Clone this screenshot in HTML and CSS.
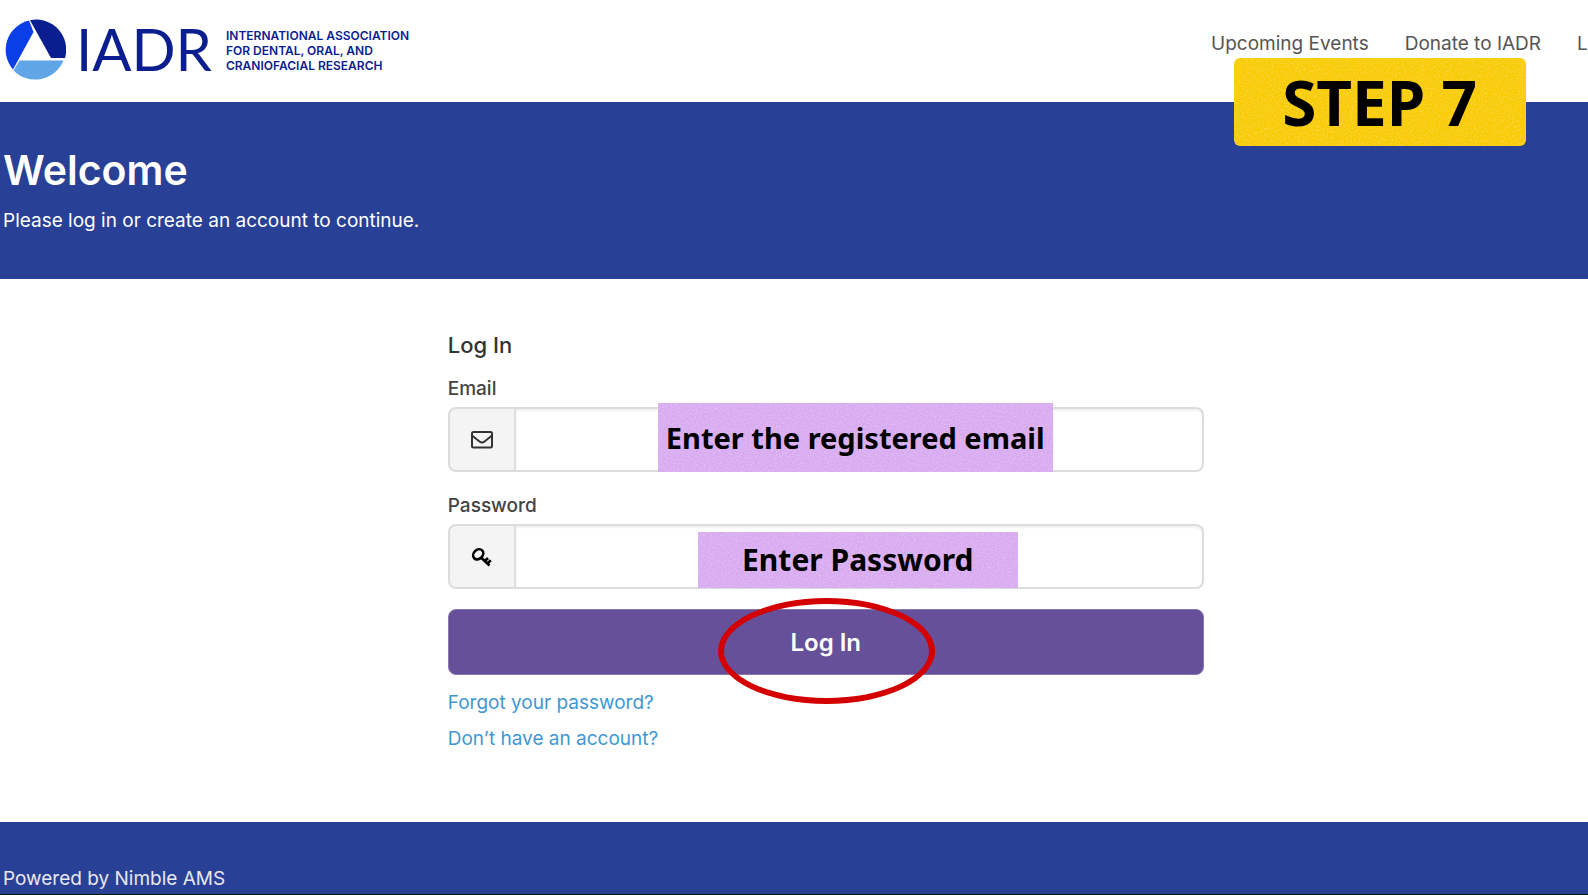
FILE: index.html
```html
<!DOCTYPE html>
<html lang="en">
  <head>
    <title>Log In - IADR</title>
    <meta charset="UTF-8" />
    <meta name="viewport" content="width=device-width" />
    <link rel="stylesheet" href="styles.css">
  </head>
  <body>
    <div class="page">
      <!-- Top bar with logo and links -->
      <header class="header">
        <a class="logo" href="#">
          <svg class="logo-mark" viewBox="0 0 62 62" width="62" height="62" aria-hidden="true">
            <path d="M25 1.600 A30 30 0 0 0 9 50.500 L29.500 13 Z" fill="#0a3fe8" />
            <path d="M26 1.200 A30 30 0 0 1 61 39 L47 39 Z" fill="#0a1e8f" />
            <path d="M15.500 41.500 L59.500 41.500 A30.500 30.500 0 0 1 9.500 51.500 Z" fill="#60a5e6" />
          </svg>
          <span class="logo-name">IADR</span>
          <span class="logo-text">INTERNATIONAL ASSOCIATION<br>FOR DENTAL, ORAL, AND<br>CRANIOFACIAL RESEARCH</span>
        </a>
        <nav class="nav">
          <a href="#">Upcoming Events</a>
          <a href="#">Donate to IADR</a>
          <a href="#">Log In</a>
        </nav>
        <div class="note note-step">
          <svg class="grain" aria-hidden="true">
            <filter id="grain">
              <feTurbulence type="fractalNoise" baseFrequency="0.6" numOctaves="2" />
              <feColorMatrix values="0 0 0 0 1  0 0 0 0 1  0 0 0 0 1  1.2 0 0 0 -0.5" />
            </filter>
            <rect width="100%" height="100%" filter="url(#grain)" />
          </svg>
          <span>STEP 7</span>
        </div>
      </header>

      <!-- Welcome banner -->
      <section class="banner">
        <h1>Welcome</h1>
        <p>Please log in or create an account to continue.</p>
      </section>

      <main class="main">
        <form class="login-form">
          <h2>Log In</h2>

          <label for="email">Email</label>
          <div class="input-group">
            <span class="input-icon">
              <svg viewBox="0 0 22 18" width="22" height="18" fill="none" stroke="#333" stroke-width="2" stroke-linejoin="round" aria-hidden="true">
                <rect x="1" y="1" width="20" height="15.500" rx="1.500" />
                <path d="M1 4.500 L8.500 10.500 Q11 12.500 13.500 10.500 L21 4.500" />
              </svg>
            </span>
            <input type="email" id="email" name="email">
            <div class="note note-email">
              <svg class="grain" aria-hidden="true"><rect width="100%" height="100%" filter="url(#grain)" /></svg>
              <span>Enter the registered email</span>
            </div>
          </div>

          <label for="password">Password</label>
          <div class="input-group">
            <span class="input-icon">
              <svg viewBox="0 0 22 20" width="22" height="20" fill="none" stroke="#000" stroke-width="2.600" aria-hidden="true">
                <ellipse cx="7.200" cy="7.300" rx="5.600" ry="4.500" transform="rotate(-45 7.200 7.300)" />
                <path d="M10 10.500 L18.500 18.500 M14 14 L17 11 M16.500 16.500 L19.800 13.300" />
              </svg>
            </span>
            <input type="password" id="password" name="password">
            <div class="note note-password">
              <svg class="grain" aria-hidden="true"><rect width="100%" height="100%" filter="url(#grain)" /></svg>
              <span>Enter Password</span>
            </div>
          </div>

          <div class="submit-row">
            <button type="submit" class="login-button">Log In</button>
            <div class="ring"></div>
          </div>

          <a class="form-link" href="#">Forgot your password?</a>
          <a class="form-link" href="#">Don’t have an account?</a>
        </form>
      </main>

      <footer class="footer">Powered by Nimble AMS</footer>
    </div>
  </body>
</html>
```

FILE: styles.css
```css
* {
  box-sizing: border-box;
}

body {
  margin: 0;
  background-color: #fff;
  color: #444;
  font-family: Inter, "Liberation Sans", sans-serif;
  font-size: 19px;
  line-height: 36px;
  overflow: hidden;
}

a {
  text-decoration: none;
}

/* The page runs a little wider than the window */
.page {
  display: flex;
  flex-direction: column;
  width: 104%;
  min-height: 100vh;
}

/* Header */
.header {
  position: relative;
  display: flex;
  justify-content: space-between;
  align-items: center;
  height: 102px;
  padding: 0 19px 2px 4px;
}

.logo {
  display: flex;
  align-items: center;
  color: #0a1e8f;
}

.logo-name {
  margin: 0 14px 0 10px;
  padding-bottom: 2px;
  font-family: Lato, sans-serif;
  font-size: 58px;
}

.logo-text {
  font-size: 12px;
  font-weight: 600;
  line-height: 15px;
}

.nav {
  display: flex;
  gap: 36px;
  padding-bottom: 12px;
  white-space: nowrap;
}

.nav a {
  color: #555;
}

/* Welcome banner */
.banner {
  padding: 40px 3px;
  background-color: #284095;
  color: #fff;
}

.banner h1 {
  margin: 0 0 5px;
  font-size: 41px;
  font-weight: 600;
  line-height: 56px;
}

.banner p {
  margin: 0;
}

/* Login form */
.main {
  flex: 1;
  padding: 48px 24px 60px;
}

.login-form {
  display: flex;
  flex-direction: column;
  max-width: 756px;
  margin: 0 auto;
}

.login-form h2 {
  margin: 0 0 8px;
  color: #333;
  font-size: 22px;
  font-weight: 500;
}

.login-form label {
  font-weight: 500;
}

.input-group {
  position: relative;
  display: flex;
  height: 65px;
  margin-bottom: 16px;
}

.input-icon {
  display: flex;
  align-items: center;
  justify-content: center;
  width: 68px;
  border: 2px solid #dcdcde;
  border-radius: 8px 0 0 8px;
  background-color: #f4f4f4;
}

.input-group input {
  flex: 1;
  min-width: 0;
  padding: 0 16px;
  border: 2px solid #dcdcde;
  border-left: 0;
  border-radius: 0 8px 8px 0;
  box-shadow: inset 0 2px 2px rgba(0, 0, 0, 0.06);
  font: inherit;
}

.submit-row {
  position: relative;
  display: flex;
  margin: 4px 0 10px;
}

.login-button {
  flex: 1;
  height: 66px;
  border: 1px solid #8878b2;
  border-radius: 8px;
  background-color: #655099;
  color: #fff;
  font-family: inherit;
  font-size: 24px;
  font-weight: 600;
  cursor: pointer;
}

.form-link {
  align-self: flex-start;
  color: #3f97d3;
}

/* Notes laid over the page */
.note {
  position: absolute;
  display: flex;
  align-items: center;
  justify-content: center;
  overflow: hidden;
  background-color: #d8aaf0;
  color: #000;
  font-family: "Noto Sans", sans-serif;
  font-size: 30px;
  font-weight: 700;
  white-space: nowrap;
  pointer-events: none;
}

.note span {
  position: relative;
}

.grain {
  position: absolute;
  inset: 0;
  width: 100%;
  height: 100%;
  opacity: 0.5;
}

.note-step {
  top: 58px;
  right: 126px;
  width: 292px;
  height: 88px;
  border-radius: 6px;
  background-color: #f9cb05;
  font-size: 62px;
}

.note-email {
  top: -4px;
  left: 210px;
  width: 395px;
  height: 69px;
  font-size: 29px;
}

.note-password {
  top: 8px;
  left: 250px;
  width: 320px;
  height: 56px;
}

/* Red ring around the button text */
.ring {
  position: absolute;
  top: -11px;
  left: 270px;
  width: 217px;
  height: 106px;
  border: 6px solid #d40000;
  border-radius: 50%;
  pointer-events: none;
}

.footer {
  padding: 41px 3px 0;
  border-bottom: 1px solid #111;
  background-color: #284095;
  color: #e8e8f0;
  line-height: 31px;
}
```
